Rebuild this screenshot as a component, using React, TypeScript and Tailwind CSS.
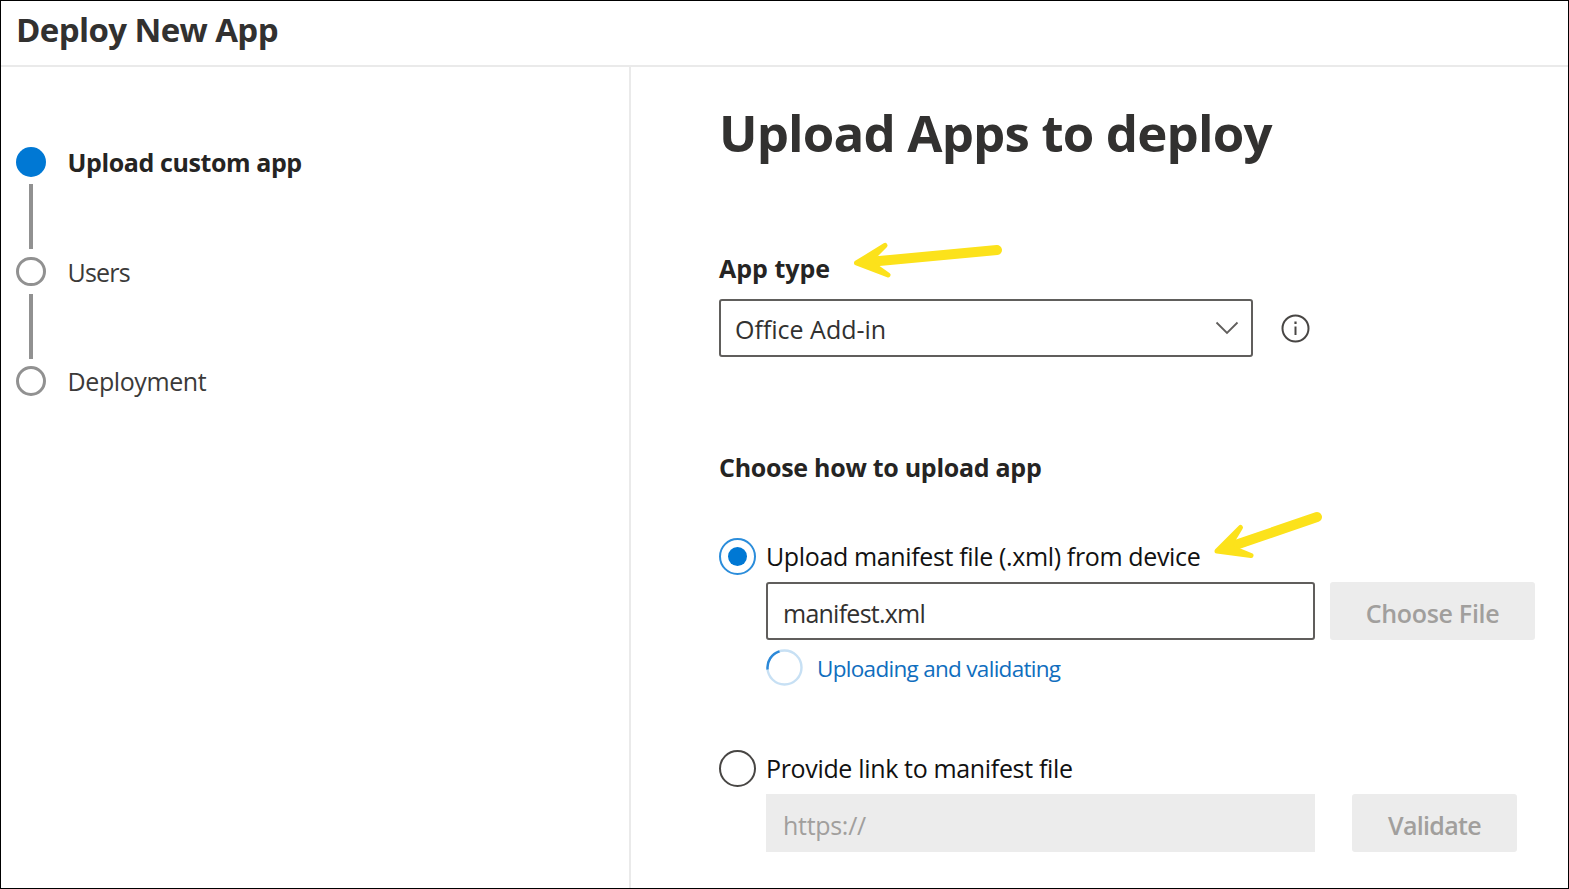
import clsx from "clsx";

const steps = [
  { label: "Upload custom app", active: true, spacing: "tracking-[-0.4px]" },
  { label: "Users", active: false, spacing: "tracking-[-0.8px]" },
  { label: "Deployment", active: false, spacing: "tracking-[-0.4px]" },
];

function Stepper() {
  return (
    <ol className="flex flex-col pl-[15px] pt-20">
      {steps.map((step, i) => (
        <li key={step.label} className="flex h-[109.5px] gap-[22px]">
          <div className="flex flex-col items-center gap-[7.5px]">
            <span
              className={clsx(
                "box-border size-[29.5px] shrink-0 rounded-full",
                step.active ? "bg-[#0078d4]" : "border-[3px] border-[#919191]"
              )}
            />
            {i < steps.length - 1 && (
              <span className="h-[65px] w-[3.5px] bg-[#919191]" />
            )}
          </div>
          <span
            className={clsx(
              "h-[30px] text-[25px] leading-[30px]",
              step.spacing,
              step.active ? "font-bold text-[#252423]" : "text-[#3b3a39]"
            )}
          >
            {step.label}
          </span>
        </li>
      ))}
    </ol>
  );
}

function Radio({ checked }: { checked?: boolean }) {
  return (
    <span
      className={clsx(
        "flex size-[37px] shrink-0 items-center justify-center rounded-full border-2",
        checked ? "border-[#2b8ddb]" : "border-[#484644]"
      )}
    >
      {checked && <span className="size-[19px] rounded-full bg-[#0078d4]" />}
    </span>
  );
}

function Arrows() {
  return (
    <svg
      className="pointer-events-none absolute left-0 top-0"
      width="1569"
      height="889"
      viewBox="1 1 1569 889"
      fill="#fce21b"
      stroke="#fce21b"
      strokeLinecap="round"
      strokeLinejoin="round"
    >
      <path d="M871 261.8L997 250" strokeWidth="10" />
      <path d="M856.5 263L885 245.5L869 261.5L888 275Z" strokeWidth="5" />
      <path d="M1231 546.5L1317 517" strokeWidth="10" />
      <path d="M1217 551L1240.5 527.5L1229 546.5L1251 555.5Z" strokeWidth="5" />
    </svg>
  );
}

export default function App() {
  return (
    <div className="relative flex h-[889px] w-[1569px] flex-col overflow-hidden border border-black bg-white font-['Open_Sans','Noto_Sans',sans-serif] text-[#323130]">
      <header className="flex h-[66px] shrink-0 items-center border-b-2 border-[#eaeaea] pb-[7px] pl-[15px]">
        <h1 className="text-[33px] font-bold leading-[44px] tracking-[-0.6px] whitespace-nowrap">
          Deploy New App
        </h1>
      </header>

      <div className="flex min-h-0 flex-1">
        <aside className="w-[630px] shrink-0 border-r-2 border-[#eaeaea]">
          <Stepper />
        </aside>

        <main className="flex flex-1 flex-col items-start whitespace-nowrap pl-[88px]">
          <h2 className="mt-[29px] h-[72px] text-[51px] font-bold leading-[72px] tracking-[-0.85px]">
            Upload Apps to deploy
          </h2>

          <label className="mt-[83px] h-[34px] text-[25px] font-bold leading-[34px] text-[#252423]">
            App type
          </label>
          <div className="mt-[14px] flex items-center">
            <div className="flex h-[58px] w-[534px] items-center justify-between rounded-[3px] border-2 border-[#605e5c] pl-[14px] pr-3">
              <span className="pt-0.5 text-[25px] leading-[34px]">Office Add-in</span>
              <svg width="24" height="14" viewBox="0 0 24 14" fill="none" stroke="#605e5c" strokeWidth="1.8">
                <path d="M1.5 1.5L12 12L22.5 1.5" />
              </svg>
            </div>
            <svg className="ml-7 mt-px" width="29" height="29" viewBox="0 0 29 29" fill="none" stroke="#484644">
              <circle cx="14.5" cy="14.5" r="13" strokeWidth="2" />
              <path d="M14.5 12.5V21" strokeWidth="2" />
              <path d="M14.5 7.5V10" strokeWidth="2.2" />
            </svg>
          </div>

          <h3 className="mt-[93px] h-[34px] text-[25px] font-bold leading-[34px] tracking-[-0.28px] text-[#252423]">
            Choose how to upload app
          </h3>

          <div className="mt-[54px] flex h-[37px] items-center gap-2.5">
            <Radio checked />
            <span className="pb-0.5 text-[25px] leading-[34px] tracking-[-0.36px] text-[#111]">
              Upload manifest file (.xml) from device
            </span>
          </div>
          <div className="ml-[47px] mt-[7px] flex gap-[15px]">
            <div className="flex h-[58px] w-[549px] items-center rounded-[3px] border-2 border-[#605e5c] pl-[15px] pt-1.5 text-[25px] tracking-[-0.75px]">
              manifest.xml
            </div>
            <button className="h-[58px] w-[205px] rounded-[3px] bg-[#ececec] pt-1.5 text-[25px] font-semibold tracking-[-0.3px] text-[#a19f9d]">
              Choose File
            </button>
          </div>
          <div className="ml-[47px] mt-[9px] flex h-[37px] items-center gap-[14px]">
            <svg width="37" height="37" viewBox="0 0 37 37" fill="none" strokeWidth="2.4">
              <circle cx="18.5" cy="18.5" r="17" stroke="#c7e0f4" />
              <path d="M1.6 20.5A17 17 0 0 1 13.5 2.3" stroke="#2b88d8" />
            </svg>
            <span className="pt-0.5 text-[22.5px] leading-[30px] tracking-[-0.7px] text-[#106ebe]">
              Uploading and validating
            </span>
          </div>

          <div className="mt-16 flex h-[37px] items-center gap-2.5">
            <Radio />
            <span className="pb-0.5 text-[25px] leading-[34px] tracking-[-0.34px] text-[#111]">
              Provide link to manifest file
            </span>
          </div>
          <div className="ml-[47px] mt-[7px] flex gap-[37px]">
            <div className="flex h-[58px] w-[549px] items-center bg-[#ececec] pl-[17px] pt-1.5 text-[25px] tracking-[-0.3px] text-[#a19f9d]">
              https://
            </div>
            <button className="h-[58px] w-[165px] rounded-[3px] bg-[#ececec] pt-1.5 text-[25px] font-semibold tracking-[-0.7px] text-[#a19f9d]">
              Validate
            </button>
          </div>
        </main>
      </div>

      <Arrows />
    </div>
  );
}
